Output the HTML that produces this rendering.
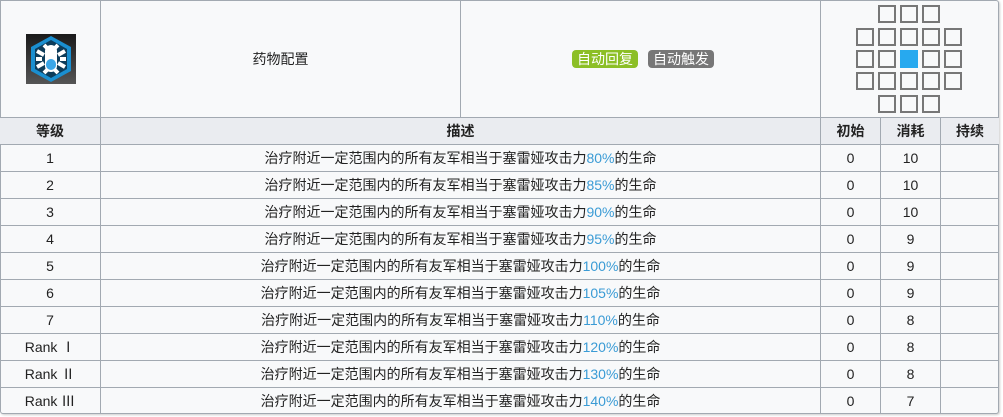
<!DOCTYPE html>
<html><head><meta charset="utf-8"><style>
body{margin:0;background:#fff;width:1003px;height:417px;overflow:hidden;font-family:"Liberation Sans","Noto Sans CJK SC",sans-serif;color:#222}
.wrap{position:absolute;left:0;top:0;width:999px;height:414px;background:#f8f9fa;border:1px solid #a2a9b1;box-sizing:border-box;border-radius:0 3px 3px 3px;box-shadow:1px 1px 2px #ccc}
.c{position:absolute;display:flex;align-items:center;justify-content:center;font-size:14px;box-sizing:border-box}
.v{position:absolute;top:0;width:1px;background:#a2a9b1}
.h{position:absolute;left:0;width:999px;height:1px;background:#a2a9b1}
.hd{position:absolute;left:0;top:117px;width:999px;height:27px;background:#eaecf0}
b{font-weight:bold}
.bl{color:#3a9bd5}
.bd{position:absolute;top:50px;height:18px;width:66px;border-radius:4px;color:#fff;font-size:14px;display:flex;align-items:center;justify-content:center}
.sq{position:absolute;width:18px;height:18px;border:2px solid #777;box-sizing:border-box}
</style></head><body>
<div class="wrap"></div>
<div class="hd"></div>
<div class="v" style="left:100px;height:414px"></div>
<div class="v" style="left:460px;height:117px"></div>
<div class="v" style="left:820px;height:414px"></div>
<div class="v" style="left:880px;top:117px;height:297px"></div>
<div class="v" style="left:940px;top:117px;height:297px"></div>
<div class="h" style="top:117px"></div>
<div class="h" style="top:144px"></div>
<div class="h" style="top:171px"></div>
<div class="h" style="top:198px"></div>
<div class="h" style="top:225px"></div>
<div class="h" style="top:252px"></div>
<div class="h" style="top:279px"></div>
<div class="h" style="top:306px"></div>
<div class="h" style="top:333px"></div>
<div class="h" style="top:360px"></div>
<div class="h" style="top:387px"></div>

<svg style="position:absolute;left:26px;top:34px" width="50" height="50" viewBox="0 0 50 50">
<defs><linearGradient id="g" x1="0" y1="0" x2="0" y2="1"><stop offset="0" stop-color="#1a1a1a"/><stop offset="1" stop-color="#555"/></linearGradient></defs>
<rect width="50" height="50" fill="url(#g)"/>
<polygon points="25,2 45,13 45,37 25,48 5,37 5,13" fill="#1a8fd0"/>
<polygon points="25,6 41,15 41,35 25,44 9,35 9,15" fill="#0d3c5a"/>
<g stroke="#fff" stroke-width="4" fill="none"><path d="M11 17l7 4M39 17l-7 4M11 33l7-4M39 33l-7-4M10 25h6M40 25h-6M18 11l4 4M32 11l-4 4M18 39l4-4M32 39l-4-4"/></g>
<rect x="19" y="11" width="12" height="27" rx="6" fill="#fff"/>
<rect x="20" y="25" width="10" height="11" rx="5" fill="#3aa6e8"/>
</svg>
<div class="c" style="left:101px;top:0;width:359px;height:117px;font-size:14px">药物配置</div>
<div class="bd" style="left:572px;background:#8cbf26">自动回复</div>
<div class="bd" style="left:648px;background:#777">自动触发</div>

<div class="sq" style="left:878px;top:5px"></div><div class="sq" style="left:900px;top:5px"></div><div class="sq" style="left:922px;top:5px"></div>
<div class="sq" style="left:856px;top:28px"></div><div class="sq" style="left:878px;top:28px"></div><div class="sq" style="left:900px;top:28px"></div><div class="sq" style="left:922px;top:28px"></div><div class="sq" style="left:944px;top:28px"></div>
<div class="sq" style="left:856px;top:50px"></div><div class="sq" style="left:878px;top:50px"></div><div class="sq" style="left:900px;top:50px;background:#27a9ef;border-color:#27a9ef"></div><div class="sq" style="left:922px;top:50px"></div><div class="sq" style="left:944px;top:50px"></div>
<div class="sq" style="left:856px;top:72px"></div><div class="sq" style="left:878px;top:72px"></div><div class="sq" style="left:900px;top:72px"></div><div class="sq" style="left:922px;top:72px"></div><div class="sq" style="left:944px;top:72px"></div>
<div class="sq" style="left:878px;top:95px"></div><div class="sq" style="left:900px;top:95px"></div><div class="sq" style="left:922px;top:95px"></div>

<div class="c" style="left:0;top:117px;width:100px;height:27px"><b>等级</b></div>
<div class="c" style="left:101px;top:117px;width:719px;height:27px"><b>描述</b></div>
<div class="c" style="left:821px;top:117px;width:59px;height:27px"><b>初始</b></div>
<div class="c" style="left:881px;top:117px;width:59px;height:27px"><b>消耗</b></div>
<div class="c" style="left:941px;top:117px;width:58px;height:27px"><b>持续</b></div>

<div class="c" style="left:0;top:144px;width:100px;height:27px">1</div><div class="c" style="left:101px;top:144px;width:719px;height:27px">治疗附近一定范围内的所有友军相当于塞雷娅攻击力<span class="bl">80%</span>的生命</div><div class="c" style="left:821px;top:144px;width:59px;height:27px">0</div><div class="c" style="left:881px;top:144px;width:59px;height:27px">10</div>
<div class="c" style="left:0;top:171px;width:100px;height:27px">2</div><div class="c" style="left:101px;top:171px;width:719px;height:27px">治疗附近一定范围内的所有友军相当于塞雷娅攻击力<span class="bl">85%</span>的生命</div><div class="c" style="left:821px;top:171px;width:59px;height:27px">0</div><div class="c" style="left:881px;top:171px;width:59px;height:27px">10</div>
<div class="c" style="left:0;top:198px;width:100px;height:27px">3</div><div class="c" style="left:101px;top:198px;width:719px;height:27px">治疗附近一定范围内的所有友军相当于塞雷娅攻击力<span class="bl">90%</span>的生命</div><div class="c" style="left:821px;top:198px;width:59px;height:27px">0</div><div class="c" style="left:881px;top:198px;width:59px;height:27px">10</div>
<div class="c" style="left:0;top:225px;width:100px;height:27px">4</div><div class="c" style="left:101px;top:225px;width:719px;height:27px">治疗附近一定范围内的所有友军相当于塞雷娅攻击力<span class="bl">95%</span>的生命</div><div class="c" style="left:821px;top:225px;width:59px;height:27px">0</div><div class="c" style="left:881px;top:225px;width:59px;height:27px">9</div>
<div class="c" style="left:0;top:252px;width:100px;height:27px">5</div><div class="c" style="left:101px;top:252px;width:719px;height:27px">治疗附近一定范围内的所有友军相当于塞雷娅攻击力<span class="bl">100%</span>的生命</div><div class="c" style="left:821px;top:252px;width:59px;height:27px">0</div><div class="c" style="left:881px;top:252px;width:59px;height:27px">9</div>
<div class="c" style="left:0;top:279px;width:100px;height:27px">6</div><div class="c" style="left:101px;top:279px;width:719px;height:27px">治疗附近一定范围内的所有友军相当于塞雷娅攻击力<span class="bl">105%</span>的生命</div><div class="c" style="left:821px;top:279px;width:59px;height:27px">0</div><div class="c" style="left:881px;top:279px;width:59px;height:27px">9</div>
<div class="c" style="left:0;top:306px;width:100px;height:27px">7</div><div class="c" style="left:101px;top:306px;width:719px;height:27px">治疗附近一定范围内的所有友军相当于塞雷娅攻击力<span class="bl">110%</span>的生命</div><div class="c" style="left:821px;top:306px;width:59px;height:27px">0</div><div class="c" style="left:881px;top:306px;width:59px;height:27px">8</div>
<div class="c" style="left:0;top:333px;width:100px;height:27px">Rank Ⅰ</div><div class="c" style="left:101px;top:333px;width:719px;height:27px">治疗附近一定范围内的所有友军相当于塞雷娅攻击力<span class="bl">120%</span>的生命</div><div class="c" style="left:821px;top:333px;width:59px;height:27px">0</div><div class="c" style="left:881px;top:333px;width:59px;height:27px">8</div>
<div class="c" style="left:0;top:360px;width:100px;height:27px">Rank Ⅱ</div><div class="c" style="left:101px;top:360px;width:719px;height:27px">治疗附近一定范围内的所有友军相当于塞雷娅攻击力<span class="bl">130%</span>的生命</div><div class="c" style="left:821px;top:360px;width:59px;height:27px">0</div><div class="c" style="left:881px;top:360px;width:59px;height:27px">8</div>
<div class="c" style="left:0;top:387px;width:100px;height:27px">Rank Ⅲ</div><div class="c" style="left:101px;top:387px;width:719px;height:27px">治疗附近一定范围内的所有友军相当于塞雷娅攻击力<span class="bl">140%</span>的生命</div><div class="c" style="left:821px;top:387px;width:59px;height:27px">0</div><div class="c" style="left:881px;top:387px;width:59px;height:27px">7</div>
</body></html>
